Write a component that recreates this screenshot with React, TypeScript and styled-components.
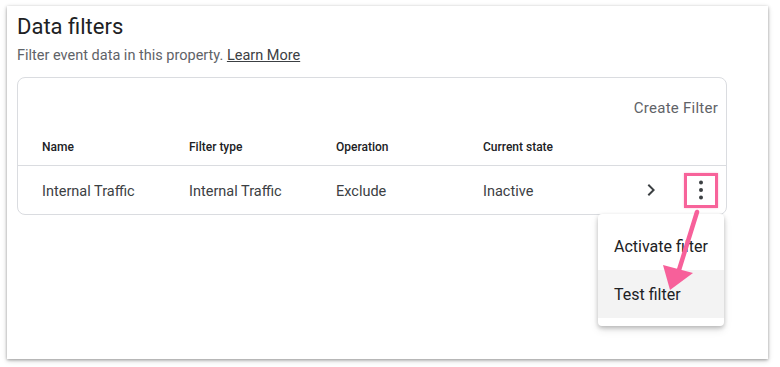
import * as React from 'react'
import styled, { createGlobalStyle } from 'styled-components'

const GlobalStyle = createGlobalStyle`
  html, body {
    margin: 0;
    background: #ffffff;
    font-family: Roboto, "Liberation Sans", sans-serif;
  }
`

const Page = styled.div`
  padding: 6px 12px 8px 7px;
  width: 780px;
  height: 367px;
  box-sizing: border-box;
`

const Panel = styled.div`
  height: 353px;
  background: #fff;
  box-shadow: 0 1px 3px rgba(0, 0, 0, 0.35), 0 2px 6px rgba(0, 0, 0, 0.12);
  padding: 7px 10px 0 10px;
  box-sizing: border-box;
`

const Title = styled.h1`
  margin: 0;
  font-size: 22px;
  font-weight: 400;
  color: #202124;
  line-height: 28px;
`

const Subtitle = styled.p`
  margin: 5px 0 0;
  font-size: 14.5px;
  line-height: 20px;
  color: #5f6368;
  a {
    color: #3c4043;
    text-decoration: underline;
  }
`

const Card = styled.div`
  position: relative;
  width: 710px;
  margin-top: 11px;
  border: 1px solid #dadce0;
  border-radius: 8px;
  box-sizing: border-box;
`

const Toolbar = styled.div`
  display: flex;
  justify-content: flex-end;
  align-items: center;
  height: 60px;
`

const TextButton = styled.button`
  border: 0;
  background: none;
  font-family: inherit;
  font-size: 15px;
  font-weight: 400;
  letter-spacing: 0.25px;
  color: #5f6368;
  padding: 8px;
  cursor: pointer;
`

const Row = styled.div<{ $head?: boolean }>`
  display: grid;
  grid-template-columns: 147px 147px 147px 1fr 46px 50px;
  align-items: center;
  padding-left: 24px;
  padding-top: ${p => (p.$head ? '1px' : '3px')};
  box-sizing: border-box;
  color: ${p => (p.$head ? '#202124' : '#3c4043')};
  font-size: ${p => (p.$head ? '12px' : '14.5px')};
  font-weight: ${p => (p.$head ? 500 : 400)};
  height: ${p => (p.$head ? '28px' : '48px')};
  border-bottom: ${p => (p.$head ? '1px solid #dadce0' : 'none')};
  align-content: ${p => (p.$head ? 'start' : 'center')};
`

const Cell = styled.div`
  line-height: 16px;
`

const IconCell = styled.div<{ $nudge?: number }>`
  display: flex;
  align-items: center;
  justify-content: center;
  color: #3c4043;
  margin-top: -3px;
  padding-right: ${p => p.$nudge ?? 0}px;
`

const Highlight = styled.div`
  width: 34px;
  height: 35px;
  box-sizing: border-box;
  border: 3px solid #f7639a;
  display: flex;
  align-items: center;
  justify-content: center;
  box-shadow: 0 0 2px rgba(247, 99, 154, 0.4);
`

const Menu = styled.ul`
  position: absolute;
  top: 136px;
  left: 580px;
  width: 126px;
  margin: 0;
  padding: 8px 0;
  list-style: none;
  background: #fff;
  border-radius: 4px;
  box-shadow: 0 2px 4px rgba(0, 0, 0, 0.22), 0 4px 8px rgba(0, 0, 0, 0.1);
  z-index: 2;
`

const MenuItem = styled.li<{ $active?: boolean }>`
  height: 48px;
  display: flex;
  align-items: center;
  padding-left: 16px;
  font-size: 16px;
  color: #202124;
  background: ${p => (p.$active ? '#f3f3f3' : 'transparent')};
`

const Arrow = styled.svg`
  position: absolute;
  left: 640px;
  top: 128px;
  z-index: 3;
  pointer-events: none;
`

const Chevron = () => (
  <svg width="24" height="24" viewBox="0 0 24 24">
    <path d="M8.6 16.6 13.2 12 8.6 7.4 10 6l6 6-6 6z" fill="#3c4043" />
  </svg>
)

const Kebab = () => (
  <svg width="24" height="24" viewBox="0 0 24 24">
    <circle cx="12" cy="4.5" r="2" fill="#3c4043" />
    <circle cx="12" cy="12" r="2" fill="#3c4043" />
    <circle cx="12" cy="19.5" r="2" fill="#3c4043" />
  </svg>
)

export default function App() {
  return (
    <Page>
      <GlobalStyle />
      <Panel>
        <Title>Data filters</Title>
        <Subtitle>
          Filter event data in this property. <a href="#">Learn More</a>
        </Subtitle>
        <Card>
          <Toolbar>
            <TextButton>Create Filter</TextButton>
          </Toolbar>
          <Row $head>
            <Cell>Name</Cell>
            <Cell>Filter type</Cell>
            <Cell>Operation</Cell>
            <Cell>Current state</Cell>
          </Row>
          <Row>
            <Cell>Internal Traffic</Cell>
            <Cell>Internal Traffic</Cell>
            <Cell>Exclude</Cell>
            <Cell>Inactive</Cell>
            <IconCell $nudge={4}>
              <Chevron />
            </IconCell>
            <IconCell>
              <Highlight>
                <Kebab />
              </Highlight>
            </IconCell>
          </Row>
          <Menu>
            <MenuItem>Activate filter</MenuItem>
            <MenuItem $active>Test filter</MenuItem>
          </Menu>
          <Arrow width="70" height="90" viewBox="0 0 70 90">
            <line x1="39" y1="6" x2="21" y2="64" stroke="#f7609a" strokeWidth="4.5" strokeLinecap="round" />
            <polygon points="12,84 5,59 35,67" fill="#f7609a" />
          </Arrow>
        </Card>
      </Panel>
    </Page>
  )
}
